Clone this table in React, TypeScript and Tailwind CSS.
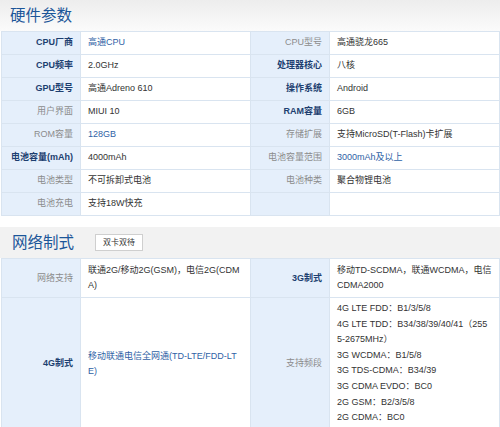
import * as React from "react";

type Cell = { text: string; bold?: boolean; blue?: boolean };
type Row = [Cell, Cell, Cell, Cell];

const hardware: Row[] = [
  [{ text: "CPU厂商", bold: true }, { text: "高通CPU", blue: true }, { text: "CPU型号" }, { text: "高通骁龙665" }],
  [{ text: "CPU频率", bold: true }, { text: "2.0GHz" }, { text: "处理器核心", bold: true }, { text: "八核" }],
  [{ text: "GPU型号", bold: true }, { text: "高通Adreno 610" }, { text: "操作系统", bold: true }, { text: "Android" }],
  [{ text: "用户界面" }, { text: "MIUI 10" }, { text: "RAM容量", bold: true }, { text: "6GB" }],
  [{ text: "ROM容量" }, { text: "128GB", blue: true }, { text: "存储扩展" }, { text: "支持MicroSD(T-Flash)卡扩展" }],
  [{ text: "电池容量(mAh)", bold: true }, { text: "4000mAh" }, { text: "电池容量范围" }, { text: "3000mAh及以上", blue: true }],
  [{ text: "电池类型" }, { text: "不可拆卸式电池" }, { text: "电池种类" }, { text: "聚合物锂电池" }],
  [{ text: "电池充电" }, { text: "支持18W快充" }, { text: "" }, { text: "" }],
];

const bands: React.ReactNode[] = [
  "4G LTE FDD：B1/3/5/8",
  <>
    4G LTE TDD：B34/38/39/40/41（255
    <br />
    5-2675MHz）
  </>,
  "3G WCDMA：B1/5/8",
  "3G TDS-CDMA：B34/39",
  "3G CDMA EVDO：BC0",
  "2G GSM：B2/3/5/8",
  "2G CDMA：BC0",
];

const labelCls = (c: Cell) =>
  c.bold
    ? "bg-[#e5effb] text-right pr-[7px] font-bold text-[#1d3f70] border border-[#d9e4f0]"
    : "bg-[#e5effb] text-right pr-[7px] text-[#8c8c8c] border border-[#d9e4f0]";

const valueCls = (c: Cell) =>
  c.blue
    ? "bg-white pl-[7px] pr-[5px] text-[#2f62a6] border border-[#d9e4f0] break-all"
    : "bg-white pl-[7px] pr-[5px] text-[#333] border border-[#d9e4f0] break-all";

const SpecCols = () => (
  <colgroup>
    <col className="w-[79px]" />
    <col className="w-[170px]" />
    <col className="w-[79px]" />
    <col className="w-[170px]" />
  </colgroup>
);

export default function App() {
  return (
    <div
      className="w-[500px] h-[427px] overflow-hidden bg-white text-[9px]"
      style={{ fontFamily: '"Liberation Sans", "Noto Sans CJK SC", sans-serif' }}
    >
      <div className="h-[31px] flex items-center pl-[10px] bg-gradient-to-b from-[#ededed] to-[#fbfbfb]">
        <h2 className="text-[15.5px] text-[#1c5699]">硬件参数</h2>
      </div>
      <table className="table-fixed border-collapse w-[498px] ml-px">
        <SpecCols />
        <tbody>
          {hardware.map((row, i) => (
            <tr key={i} className="h-[23px]">
              <td className={labelCls(row[0])}>{row[0].text}</td>
              <td className={valueCls(row[1])}>{row[1].text}</td>
              <td className={labelCls(row[2])}>{row[2].text}</td>
              <td className={valueCls(row[3])}>{row[3].text}</td>
            </tr>
          ))}
        </tbody>
      </table>

      <div className="mt-[11px] h-[31px] flex items-center pl-[12px] gap-[21px] bg-[#f2f2f2]">
        <h2 className="text-[15.5px] text-[#1c5699]">网络制式</h2>
        <span className="h-[17px] w-[48px] flex items-center justify-center bg-white border border-[#cfcfcf] text-[8px] text-[#333]">
          双卡双待
        </span>
      </div>
      <table className="table-fixed border-collapse w-[498px] ml-px leading-[15px]">
        <SpecCols />
        <tbody>
          <tr>
            <td className={labelCls({ text: "" })}>网络支持</td>
            <td className={valueCls({ text: "" }) + " py-[4px]"}>联通2G/移动2G(GSM)，电信2G(CDMA)</td>
            <td className={labelCls({ text: "", bold: true })}>3G制式</td>
            <td className={valueCls({ text: "" }) + " py-[4px]"}>移动TD-SCDMA，联通WCDMA，电信CDMA2000</td>
          </tr>
          <tr>
            <td className={labelCls({ text: "", bold: true })}>4G制式</td>
            <td className={valueCls({ text: "", blue: true })}>移动联通电信全网通(TD-LTE/FDD-LTE)</td>
            <td className={labelCls({ text: "" })}>支持频段</td>
            <td className={valueCls({ text: "" }) + " pt-[3px] pb-[4px] leading-[15.6px]"}>
              {bands.map((b, i) => (
                <div key={i}>{b}</div>
              ))}
            </td>
          </tr>
        </tbody>
      </table>
    </div>
  );
}
